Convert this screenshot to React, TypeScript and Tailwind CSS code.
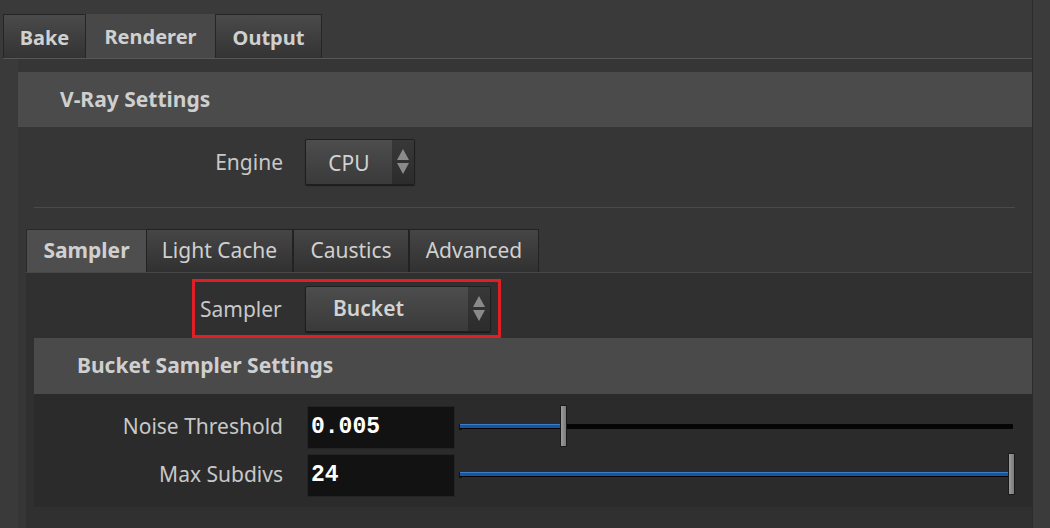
import React from 'react';

const font = { fontFamily: '"Noto Sans", "Open Sans", sans-serif' };

function Arrows() {
  return (
    <svg width="12" height="30" viewBox="0 0 12 30" className="block">
      <polygon points="6,2 12,13 0,13" fill="#8a8a8a" />
      <polygon points="0,16 12,16 6,27" fill="#8a8a8a" />
    </svg>
  );
}

function Dropdown({ value, width, bold, centered }: { value: string; width: string; bold?: boolean; centered?: boolean }) {
  return (
    <div
      className={`flex h-[46px] ${width} rounded-[2px] border border-[#1f1f1f] bg-gradient-to-b from-[#4d4d4d] to-[#3a3a3a] shadow-[0_1px_1px_rgba(0,0,0,0.5)]`}
    >
      <div
        className={`flex flex-1 items-center text-[21px] text-[#d2d2d2] ${centered ? 'justify-center pt-[3px]' : 'pl-[27px]'} ${bold ? 'font-semibold' : ''}`}
      >
        {value}
      </div>
      <div className="flex w-[22px] items-center justify-center bg-gradient-to-b from-[#383838] to-[#2c2c2c]">
        <Arrows />
      </div>
    </div>
  );
}

function Slider({ pos }: { pos: number }) {
  return (
    <div className="relative h-[44px] flex-1">
      <div className="absolute left-0 top-[19px] h-[6px] w-[3px] border-l border-y border-[#111]" />
      <div className="absolute left-[1px] right-[2px] top-[19px] h-[5px] rounded-[1px] bg-[#050505]">
        <div className="h-[4px] border-t border-[#3d7cc9] bg-[#1a55a0]" style={{ width: `${pos}%` }} />
      </div>
      <div
        className="absolute top-0 h-[42px] w-[7px] rounded-[1px] border border-[#1a1a1a] bg-gradient-to-r from-[#9c9c9c] to-[#7a7a7a]"
        style={{ left: `calc((100% - 7px) * ${pos / 100})` }}
      />
    </div>
  );
}

function Row({ label, value, pos }: { label: string; value: string; pos: number }) {
  return (
    <div className="flex h-[48px] items-center">
      <div className="w-[273px] pr-[24px] text-right text-[21px] text-[#c8c8c8]">{label}</div>
      <div
        className="flex h-[43px] w-[148px] items-center border border-[#242424] bg-[#121212] pl-[3px] text-[23px] font-bold text-white"
        style={{ fontFamily: '"Liberation Mono", monospace' }}
      >
        {value}
      </div>
      <div className="ml-[4px] mr-[17px] flex flex-1">
        <Slider pos={pos} />
      </div>
    </div>
  );
}

function TopTab({ label, active, w }: { label: string; active?: boolean; w: string }) {
  return (
    <div
      className={`flex h-[44px] ${w} items-center justify-center pt-[2px] text-[20px] font-bold text-[#d0d0d0] ${
        active ? 'bg-[#484848]' : 'border border-b-0 border-[#252525] bg-gradient-to-b from-[#4a4a4a] to-[#343434]'
      }`}
    >
      {label}
    </div>
  );
}

function SubTab({ label, active, w }: { label: string; active?: boolean; w: string }) {
  return (
    <div
      className={`flex h-[43px] ${w} items-center justify-center text-[21px] text-[#d0d0d0] border border-b-0 ${
        active
          ? 'border-[#2a2a2a] border-r-0 bg-[#4e4e4e] font-bold'
          : 'border-[#222] bg-gradient-to-b from-[#464646] to-[#313131]'
      }`}
    >
      {label}
    </div>
  );
}

export default function App() {
  return (
    <div className="flex h-[528px] w-[1050px] overflow-hidden bg-[#3a3a3a]" style={font}>
      <div className="flex w-[1032px] flex-col pt-[14px]">
        <div className="ml-[3px] flex border-b border-[#575757]">
          <TopTab label="Bake" w="w-[83px]" />
          <TopTab label="Renderer" active w="w-[129px]" />
          <TopTab label="Output" w="w-[107px]" />
        </div>
        <div className="ml-[18px] flex flex-1 flex-col bg-[#363636] pt-[13px]">
          <div className="flex h-[55px] items-center bg-[#4b4b4b] pl-[42px] text-[21px] font-bold text-[#cfcfcf]">
            V-Ray Settings
          </div>
          <div className="flex items-center pt-[12px]">
            <div className="w-[287px] pr-[22px] pt-[2px] text-right text-[21px] text-[#c8c8c8]">Engine</div>
            <Dropdown value="CPU" width="w-[110px]" centered />
          </div>
          <div className="ml-[16px] mr-[17px] mt-[22px] h-px bg-[#4a4a4a]" />
          <div className="ml-[8px] mt-[21px] flex flex-1 flex-col">
            <div className="flex border-b border-[#474747]">
              <SubTab label="Sampler" active w="w-[120px]" />
              <SubTab label="Light Cache" w="w-[147px]" />
              <SubTab label="Caustics" w="w-[116px]" />
              <SubTab label="Advanced" w="w-[130px]" />
            </div>
            <div className="flex flex-1 flex-col bg-[#303030]">
              <div className="flex pt-[6px]">
                <div className="ml-[166px] flex h-[59px] w-[309px] items-center border-[3px] border-[#e01e26] pl-[5px]">
                  <div className="w-[105px] pt-[2px] text-[21px] text-[#c8c8c8]">Sampler</div>
                  <Dropdown value="Bucket" width="w-[186px]" bold />
                </div>
              </div>
              <div className="ml-[8px] flex h-[56px] items-center bg-[#4a4a4a] pl-[43px] text-[21px] font-bold text-[#cfcfcf]">
                Bucket Sampler Settings
              </div>
              <div className="ml-[8px] flex h-[113px] flex-col bg-[#2b2b2b] pt-[9px]">
                <Row label="Noise Threshold" value="0.005" pos={18.4} />
                <Row label="Max Subdivs" value="24" pos={100} />
              </div>
            </div>
          </div>
        </div>
      </div>
      <div className="flex-1 border-l border-[#2c2c2c] bg-[#3b3b3b]" />
    </div>
  );
}
